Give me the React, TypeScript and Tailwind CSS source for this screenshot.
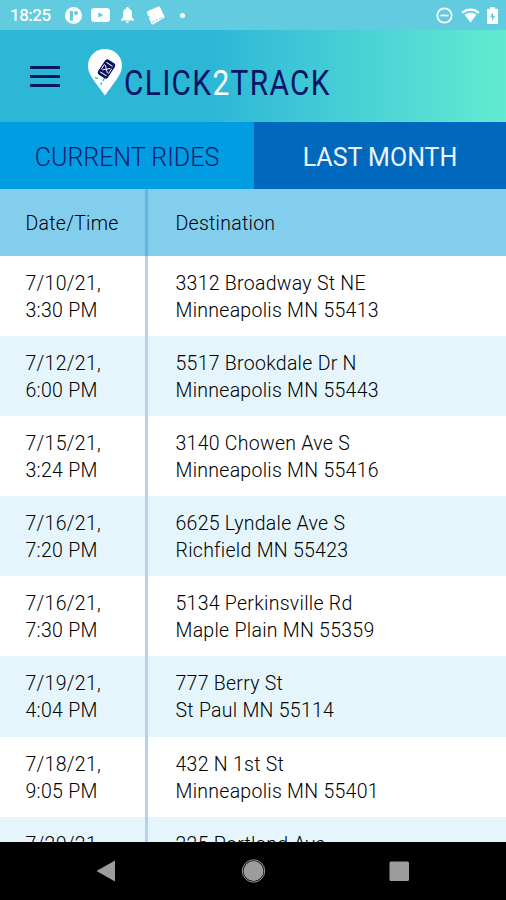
import React from 'react';

interface Ride {
  date: string;
  time: string;
  street: string;
  city: string;
}

const rides: Ride[] = [
  { date: '7/10/21,', time: '3:30 PM', street: '3312 Broadway St NE', city: 'Minneapolis MN 55413' },
  { date: '7/12/21,', time: '6:00 PM', street: '5517 Brookdale Dr N', city: 'Minneapolis MN 55443' },
  { date: '7/15/21,', time: '3:24 PM', street: '3140 Chowen Ave S', city: 'Minneapolis MN 55416' },
  { date: '7/16/21,', time: '7:20 PM', street: '6625 Lyndale Ave S', city: 'Richfield MN 55423' },
  { date: '7/16/21,', time: '7:30 PM', street: '5134 Perkinsville Rd', city: 'Maple Plain MN 55359' },
  { date: '7/19/21,', time: '4:04 PM', street: '777 Berry St', city: 'St Paul MN 55114' },
  { date: '7/18/21,', time: '9:05 PM', street: '432 N 1st St', city: 'Minneapolis MN 55401' },
  { date: '7/20/21,', time: '', street: '225 Portland Ave', city: '' },
];

function StatusBar() {
  return (
    <div className="h-[30px] shrink-0 bg-[#62cbdf] flex items-center justify-between pl-[10px] pr-[8px] text-white">
      <div className="flex items-center">
        <span className="w-[55px] text-[17px] font-medium leading-none pt-px tracking-[-0.5px]">18:25</span>
        <svg width="17" height="17" viewBox="0 0 17 17">
          <circle cx="8.5" cy="8.5" r="8.5" fill="#fff" />
          <path d="M4.8 4H8v9.6H4.8z" fill="#62cbdf" />
          <circle cx="11" cy="6" r="2" fill="#62cbdf" />
        </svg>
        <svg className="ml-[9px]" width="19" height="14" viewBox="0 0 19 14">
          <rect width="19" height="14" rx="3.5" fill="#fff" />
          <path d="M7.3 4.2v5.6l5-2.8z" fill="#62cbdf" />
        </svg>
        <svg className="ml-[11px]" width="13" height="16" viewBox="0 0 13 16">
          <path d="M6.5 0c.8 0 1.3.6 1.3 1.4C9.9 2 11 3.8 11 6v4.5l2 2v1H0v-1l2-2V6c0-2.2 1.1-4 3.2-4.6C5.2.6 5.7 0 6.5 0zM5 14.3h3c0 1-.7 1.7-1.5 1.7S5 15.3 5 14.3z" fill="#fff" />
        </svg>
        <svg className="ml-[12px]" width="19" height="19" viewBox="0 0 19 19">
          <path d="M2.5 4.7 12.5.4c.7-.3 1.2 0 1.5.6l4.400 9.400c.3.7 0 1.2-.5 1.5L7 18.400c-.6.3-1.3.1-1.6-.5L1 7c-.3-1 .3-1.8 1.5-2.3z" fill="#fff" />
          <path d="m5.6 16.3 3-1.3m1.2-.6 2-.9m1.2-.5 3.5-1.600" fill="none" stroke="#62cbdf" strokeWidth=".8" />
          <path d="M.5 11.5 4 10.5" fill="none" stroke="#62cbdf" strokeWidth="1" />
        </svg>
        <span className="ml-[15px] size-[5px] rounded-full bg-white" />
      </div>
      <div className="flex items-center">
        <svg width="17" height="17" viewBox="0 0 17 17" fill="none" stroke="#fff" strokeWidth="1.7">
          <circle cx="8.5" cy="8.5" r="7.2" />
          <path d="M4.5 8.5h8" />
        </svg>
        <svg className="ml-[8px]" width="19" height="15" viewBox="0 0 19 15">
          <path d="M1.2 4.8C6 .6 13 .6 17.8 4.8" fill="none" stroke="#fff" strokeWidth="2.2" />
          <path d="M3.6 6.7c3.5-2.5 8.3-2.5 11.8 0L9.5 14.5z" fill="#fff" />
        </svg>
        <svg className="ml-[7px]" width="11" height="17" viewBox="0 0 11 17">
          <path d="M3.2 0h4.6v1.7h2.1c.6 0 1.1.5 1.1 1.1v13.1c0 .6-.5 1.1-1.1 1.1H1.1C.5 17 0 16.5 0 15.9V2.8c0-.6.5-1.1 1.1-1.1h2.1z" fill="#fff" />
          <path d="M6 5 3 10h2v4l3-5.3H6z" fill="#62cbdf" />
        </svg>
      </div>
    </div>
  );
}

function Logo() {
  return (
    <div className="ml-[28.5px] flex items-start">
      {/* map pin with the car on its road */}
      <svg width="34" height="48" viewBox="0 0 34 48">
        <path d="M17 1C7.6 1 0 8.3 0 17.7 0 23.5 2.8 28 6.5 33.5L17 47.5 28.5 31.5C32 26 34 22.5 34 17.7 34 8.3 26.4 1 17 1z" fill="#fff" />
        <path d="m7 29.500 3 .8m2.500 6.500 4-6.500" stroke="#2eb7d7" strokeWidth="1.3" strokeDasharray="3 1.5" />
        <g transform="translate(18.5 21) rotate(33)">
          <rect x="-5.8" y="-9" width="11.6" height="18" rx="3" fill="#0b1060" />
          <path d="M-3.7-5.5h7.4M-3.7 5.8h7.4" stroke="#fff" strokeWidth="1.1" />
          <path d="M-3-2.6 3 3M3-2.6-3 3M-4.2-3v6M4.2-3v6" stroke="#fff" strokeWidth=".9" />
        </g>
      </svg>
      <h1 className="ml-[1.5px] mt-[14px] origin-left scale-x-[0.84] text-[35.5px] leading-[42px] tracking-[1.6px] text-[#061563] whitespace-nowrap">
        CLICK<span className="text-white">2</span>TRACK
      </h1>
    </div>
  );
}

function Header() {
  return (
    <header className="h-[92px] shrink-0 flex items-center pl-[30px] bg-linear-to-r from-[#2db7d7] from-42% to-[#62ebd1]">
      <div className="flex flex-col gap-[6px]">
        <span className="w-[29.5px] h-[3px] bg-[#071763]" />
        <span className="w-[29.5px] h-[3px] bg-[#071763]" />
        <span className="w-[29.5px] h-[3px] bg-[#071763]" />
      </div>
      <Logo />
    </header>
  );
}

function RideRow({ ride, striped }: { ride: Ride; striped: boolean }) {
  return (
    <div className={`flex h-[80.2px] shrink-0 ${striped ? 'bg-[#e5f5fc]' : 'bg-white'}`}>
      <div className="w-[148px] shrink-0 border-r-[3px] border-[#b7d0f2] pl-[25.5px] pt-[14px]">
        <p>{ride.date}</p>
        <p>{ride.time}</p>
      </div>
      <div className="pl-[27.5px] pt-[14px]">
        <p>{ride.street}</p>
        <p>{ride.city}</p>
      </div>
    </div>
  );
}

export default function App() {
  return (
    <div className="w-[506px] h-[900px] flex flex-col overflow-hidden bg-white font-['Roboto',sans-serif]">
      <StatusBar />
      <Header />
      <nav className="flex h-[66.5px] shrink-0 text-[25px] leading-[71px] text-center">
        <div className="w-[254px] bg-[#009de2] text-[#03206f] font-light">CURRENT RIDES</div>
        <div className="flex-1 bg-[#0069bd] text-[#eef4ff]">LAST MONTH</div>
      </nav>
      <main className="flex-1 min-h-0 flex flex-col overflow-hidden text-[19.5px] font-light leading-[27px] tracking-[0.27px] text-black whitespace-nowrap">
        <div className="flex h-[67px] shrink-0 items-stretch bg-[#83ceed] leading-[70px]">
          <div className="w-[148px] shrink-0 border-r-[3px] border-[#64b5e2] pl-[25.5px]">Date/Time</div>
          <div className="pl-[27.5px]">Destination</div>
        </div>
        {rides.map((ride, index) => (
          <RideRow key={index} ride={ride} striped={index % 2 === 1} />
        ))}
      </main>
      <footer className="h-[58px] shrink-0 bg-black">
        <svg width="506" height="58" viewBox="0 0 506 58" fill="#9c9c9c">
          <path d="M96.5 29 115 18.5v21z" />
          <circle cx="253.5" cy="29" r="10" />
          <circle cx="253.5" cy="29" r="11.2" fill="none" stroke="#9c9c9c" strokeWidth="1" />
          <rect x="389.5" y="19.5" width="19.5" height="19.5" rx="1.5" />
        </svg>
      </footer>
    </div>
  );
}
